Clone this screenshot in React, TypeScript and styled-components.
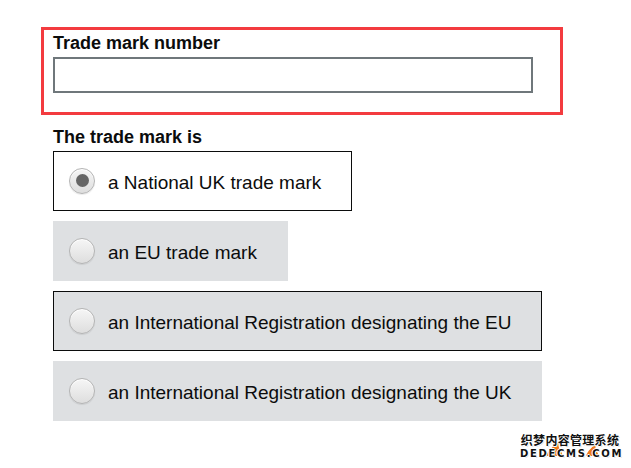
import React, { useState } from 'react';
import styled, { createGlobalStyle, css } from 'styled-components';

const GlobalStyle = createGlobalStyle`
  body {
    margin: 0;
    background: #fff;
    color: #0b0c0c;
    font-family: "Liberation Sans", Arial, sans-serif;
  }
`;

const options = [
  { id: 'national', label: 'a National UK trade mark' },
  { id: 'eu', label: 'an EU trade mark' },
  { id: 'ir-eu', label: 'an International Registration designating the EU' },
  { id: 'ir-uk', label: 'an International Registration designating the UK' },
];

const App = (): JSX.Element => {
  const [selected, setSelected] = useState('national');
  const focused = 'ir-eu';

  return (
    <Page>
      <GlobalStyle />
      <ErrorGroup>
        <FieldLabel htmlFor="tm-number">Trade mark number</FieldLabel>
        <TextInput id="tm-number" type="text" />
      </ErrorGroup>

      <Fieldset>
        <Legend>The trade mark is</Legend>
        <OptionList>
          {options.map((o) => (
            <Option
              key={o.id}
              isSelected={selected === o.id}
              isFocused={focused === o.id}
              onClick={() => setSelected(o.id)}
            >
              <Radio isChecked={selected === o.id} />
              <OptionText>{o.label}</OptionText>
            </Option>
          ))}
        </OptionList>
      </Fieldset>

      <Watermark>
        <Flame viewBox="0 0 100 20" aria-hidden="true">
          <path d="M26 18 C30 10 34 8 39 3 C37 10 41 12 43 18 Z" fill="#f07a1a" />
          <path d="M66 18 C68 12 72 10 76 5 C74 12 78 14 79 18 Z" fill="#f07a1a" />
        </Flame>
        <WatermarkCn>织梦内容管理系统</WatermarkCn>
        <WatermarkEn>DEDECMS.COM</WatermarkEn>
      </Watermark>
    </Page>
  );
};

export default App;

const Page = styled.div`
  position: relative;
  min-height: 468px;
  padding: 27px 0 0 41px;
  box-sizing: border-box;
`;

const ErrorGroup = styled.div`
  width: 522px;
  box-sizing: border-box;
  border: 3px solid #f33b3f;
  padding: 3px 9px 19px;
`;

const FieldLabel = styled.label`
  display: block;
  font-size: 18px;
  font-weight: 700;
  line-height: 20px;
  margin-bottom: 4px;
  color: #0b0c0c;
`;

const TextInput = styled.input`
  display: block;
  width: 480px;
  height: 36px;
  box-sizing: border-box;
  border: 2px solid #6f777b;
  border-radius: 0;
  padding: 4px;
  font: inherit;
  font-size: 19px;
  outline: none;
`;

const Fieldset = styled.fieldset`
  margin: 11px 0 0 12px;
  padding: 0;
  border: 0;
  min-width: 0;
`;

const Legend = styled.legend`
  padding: 1px 0 0;
  font-size: 18px;
  font-weight: 700;
  line-height: 20px;
  margin-bottom: 4px;
`;

const OptionList = styled.div`
  display: flex;
  flex-direction: column;
  align-items: flex-start;
  gap: 10px;
`;

const Option = styled.label<{ isSelected: boolean; isFocused: boolean }>`
  display: inline-flex;
  align-items: center;
  height: 60px;
  box-sizing: border-box;
  padding: 0 30px 0 15px;
  border: 1px solid transparent;
  background: #dee0e2;
  cursor: pointer;

  ${({ isSelected }) =>
    isSelected &&
    css`
      background: #fff;
      border-color: #0b0c0c;
    `}

  ${({ isFocused }) =>
    isFocused &&
    css`
      border-color: #0b0c0c;
    `}
`;

const Radio = styled.span<{ isChecked: boolean }>`
  position: relative;
  flex: none;
  width: 26px;
  height: 26px;
  margin-right: 13px;
  margin-top: -1px;
  border-radius: 50%;
  box-sizing: border-box;
  border: 1px solid #b4b4b4;
  background: linear-gradient(#f6f6f6, #dedede);
  box-shadow: inset 0 1px 1px #fff, 0 1px 1px rgba(0, 0, 0, 0.08);

  ${({ isChecked }) =>
    isChecked &&
    css`
      &::after {
        content: '';
        position: absolute;
        left: 5.5px;
        top: 5.5px;
        width: 13px;
        height: 13px;
        border-radius: 50%;
        background: #666;
      }
    `}
`;

const OptionText = styled.span`
  padding-top: 4px;
  font-size: 19px;
  line-height: 24px;
  color: #0b0c0c;
`;

const Watermark = styled.div`
  position: absolute;
  left: 520px;
  top: 432px;
  width: 100px;
  text-align: center;
  font-weight: 700;
  color: #111;
  text-shadow: 1px 0 0 #fff, -1px 0 0 #fff, 0 1px 0 #fff, 0 -1px 0 #fff,
    1px 1px 0 #ddd;
`;

const Flame = styled.svg`
  position: absolute;
  left: 0;
  top: 6px;
  width: 100px;
  height: 20px;
`;

const WatermarkCn = styled.div`
  position: relative;
  font-family: "Noto Sans CJK SC", sans-serif;
  font-size: 12px;
  line-height: 15px;
  letter-spacing: 0.3px;
  white-space: nowrap;
`;

const WatermarkEn = styled.div`
  position: relative;
  margin-top: 2px;
  font-family: "DejaVu Sans", sans-serif;
  font-size: 10px;
  line-height: 10px;
  letter-spacing: 1.7px;
  white-space: nowrap;
`;
